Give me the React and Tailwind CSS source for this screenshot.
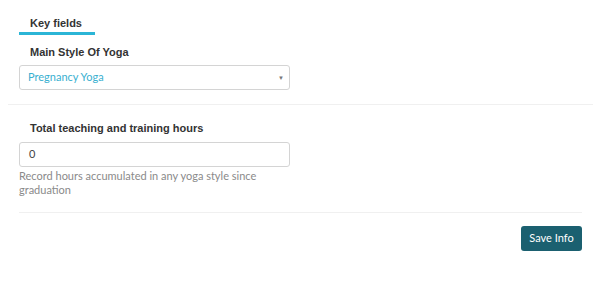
import React from "react";

function FieldLabel({ children }) {
    return (
        <div className="pl-[11px] text-[11px] leading-[14px] font-bold text-[#333] [font-family:'Liberation_Sans',Arial,sans-serif]">
            {children}
        </div>
    );
}

export default function App() {
    return (
        <div className="w-[600px] h-[281px] bg-white [font-family:'Lato',sans-serif]">
            <div className="pt-[16px] pl-[19px]">
                <div className="w-[76px] h-[19px] pl-[11px] border-b-[3px] border-[#2bb5d6] text-[11px] leading-[14px] font-bold text-[#333] [font-family:'Liberation_Sans',Arial,sans-serif]">
                    Key fields
                </div>
            </div>

            <div className="pl-[19px] pt-[10px] pb-[14px]">
                <FieldLabel>Main Style Of Yoga</FieldLabel>
                <div className="mt-[6px] w-[271px] h-[25px] border border-[#d4d4d4] rounded-[3px] flex items-center justify-between pl-[8px] pr-[5px]">
                    <span className="text-[11px] text-[#39b0d0]">Pregnancy Yoga</span>
                    <span className="text-[6px] text-[#777]">▼</span>
                </div>
            </div>

            <div className="mx-[8px] w-[585px] border-t border-[#f0f0f0]" />

            <div className="pl-[19px] pt-[16px] pb-[14px] w-[582px]">
                <FieldLabel>Total teaching and training hours</FieldLabel>
                <div className="mt-[7px] w-[271px] h-[25px] border border-[#d4d4d4] rounded-[3px] flex items-center pl-[9px]">
                    <span className="text-[11px] text-[#444]">0</span>
                </div>
                <p className="mt-[2px] w-[250px] text-[11px] leading-[14px] text-[#8a8a8a]">
                    Record hours accumulated in any yoga style since graduation
                </p>
                <div className="mt-[15px] border-t border-[#f0f0f0]" />
                <div className="flex justify-end mt-[13px]">
                    <button className="w-[61px] h-[25px] rounded-[3px] bg-[#1b6070] text-white text-[11px]">
                        Save Info
                    </button>
                </div>
            </div>
        </div>
    );
}
